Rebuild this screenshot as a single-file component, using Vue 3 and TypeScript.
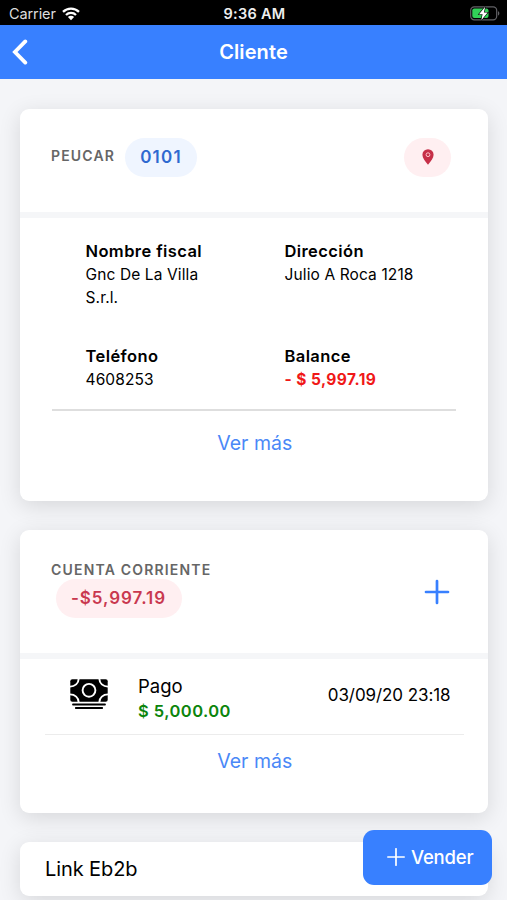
<script setup lang="ts">
interface Field {
  label: string
  value: string
  negative?: boolean
}

const fields: Field[] = [
  { label: 'Nombre fiscal', value: 'Gnc De La Villa S.r.l.' },
  { label: 'Dirección', value: 'Julio A Roca 1218' },
  { label: 'Teléfono', value: '4608253' },
  { label: 'Balance', value: '- $ 5,997.19', negative: true },
]
</script>

<template>
  <div class="screen">
    <div class="status">
      <div class="carrier">
        <span>Carrier</span>
        <svg class="wifi" width="18" height="14" viewBox="0 0 18 14">
          <g fill="none" stroke="#fff" stroke-width="2.3">
            <path d="M1 4.9a11.4 11.4 0 0 1 16 0" />
            <path d="M4 8a7.1 7.1 0 0 1 10 0" />
          </g>
          <path d="M9 13.2 5.9 10.1a4.4 4.4 0 0 1 6.2 0z" fill="#fff" />
        </svg>
      </div>
      <div class="clock">9:36 AM</div>
      <svg class="battery" width="30" height="15" viewBox="0 0 30 15">
        <rect x=".7" y=".8" width="26" height="13" rx="3.6" fill="none" stroke="#626266" stroke-width="1.2" />
        <rect x="2.3" y="2.6" width="16.2" height="9.4" rx="2" fill="#31d158" />
        <path d="M28 5.2c1.8.5 1.8 3.7 0 4.2z" fill="#626266" />
        <path d="M15.2.8 9 8.2h3.6l-1.3 6L17.7 6.5h-3.8z" fill="#fff" stroke="#000" stroke-width="1.2" paint-order="stroke" />
      </svg>
    </div>

    <header class="toolbar">
      <svg class="back" width="17" height="26" viewBox="0 0 17 26">
        <path d="M13.3 2.4 2.9 13l10.4 10.6" fill="none" stroke="#fff" stroke-width="3.8" stroke-linecap="round" stroke-linejoin="miter" />
      </svg>
      <h1>Cliente</h1>
    </header>

    <main>
      <section class="card client">
        <div class="card-head">
          <span class="caption peucar">PEUCAR</span>
          <span class="pill code">0101</span>
          <span class="pill pin">
            <svg width="12" height="16" viewBox="0 0 12 16">
              <path d="M6 .2A5.6 5.6 0 0 0 .4 5.8C.4 9.4 3.300 12.500 6 15.800c2.700-3.300 5.600-6.400 5.600-10A5.600 5.600 0 0 0 6 .2z" fill="#c62f48" />
              <circle cx="6" cy="5.700" r="1.900" fill="none" stroke="#ffc3ca" stroke-width="1" />
            </svg>
          </span>
        </div>
        <dl class="fields">
          <div v-for="field in fields" :key="field.label">
            <dt>{{ field.label }}</dt>
            <dd :class="{ negative: field.negative }">{{ field.value }}</dd>
          </div>
        </dl>
        <div class="rule"></div>
        <a class="more">Ver más</a>
      </section>

      <section class="card account">
        <div class="card-head">
          <div class="balance">
            <span class="caption">CUENTA CORRIENTE</span>
            <span class="pill debt">-$5,997.19</span>
          </div>
          <svg class="add" width="26" height="26" viewBox="0 0 26 26">
            <path d="M13 2v22M2 13h22" stroke="#3880ff" stroke-width="2.7" stroke-linecap="round" />
          </svg>
        </div>
        <div class="movement">
          <svg class="cash" width="38" height="31" viewBox="0 0 38 31">
            <rect x=".3" y=".3" width="37.400" height="22.500" rx="2" fill="#000" />
            <g fill="none" stroke="#fff" stroke-width="1.900">
              <circle cx="19" cy="11.300" r="6.400" />
              <path d="M8.600 0c0 4.200-3.600 7.600-8.600 7.600" />
              <path d="M29.400 0c0 4.200 3.600 7.600 8.600 7.600" />
              <path d="M8.600 23c0-4.200-3.600-7.600-8.600-7.600" />
              <path d="M29.400 23c0-4.200 3.600-7.600 8.600-7.600" />
            </g>
            <path d="M3 25.500h32M5.800 29h26.400" stroke="#000" stroke-width="1.800" stroke-linecap="round" />
          </svg>
          <div class="detail">
            <div class="kind">Pago</div>
            <div class="amount">$ 5,000.00</div>
          </div>
          <time>03/09/20 23:18</time>
        </div>
        <a class="more">Ver más</a>
      </section>

      <section class="card link">Link Eb2b</section>
    </main>

    <button class="sell">
      <svg width="18" height="18" viewBox="0 0 18 18">
        <path d="M9 .8v16.400M.8 9h16.400" stroke="#fff" stroke-width="1.700" stroke-linecap="round" />
      </svg>
      <span>Vender</span>
    </button>
  </div>
</template>

<style>
body {
  background: #f4f5f8;
  overflow: hidden;
}
</style>

<style scoped>
.screen {
  position: relative;
  box-sizing: border-box;
  height: 900px;
  overflow: hidden;
  background: #f4f5f8;
  color: #000;
  font-family: Inter, "Liberation Sans", sans-serif;
}

.status {
  display: grid;
  grid-template-columns: 1fr auto 1fr;
  align-items: center;
  height: 25px;
  padding: 2px 7px 0 9px;
  box-sizing: border-box;
  background: #000;
  color: #fff;
  font-size: 14.5px;
}

.carrier {
  display: flex;
  align-items: center;
  gap: 6px;
  color: #ddd;
  letter-spacing: -0.1px;
}

.clock {
  font-weight: 600;
  color: #eee;
  letter-spacing: 0.3px;
}

.battery {
  justify-self: end;
}

.toolbar {
  display: grid;
  grid-template-columns: 1fr auto 1fr;
  align-items: center;
  height: 54px;
  padding: 0 12px;
  background: #3880ff;
  color: #fff;
}

h1 {
  margin: 0;
  font-size: 20px;
  line-height: 26px;
  font-weight: 600;
  letter-spacing: 0.1px;
}

main {
  display: flex;
  flex-direction: column;
  gap: 29.5px;
  padding: 29.5px 19.5px 0 20px;
}

.card {
  flex: none;
  box-sizing: border-box;
  border-radius: 9px;
  background: #fff;
  box-shadow: 0 5px 22px rgba(0, 0, 0, 0.12);
}

.client {
  height: 392px;
}

.account {
  height: 282.5px;
}

.card-head {
  display: flex;
  align-items: flex-start;
  box-sizing: border-box;
  height: 109.5px;
  padding: 29.5px 36.5px 0 31px;
  border-bottom: 6px solid #f5f6f8;
}

.caption {
  font-size: 14px;
  line-height: 20px;
  font-weight: 600;
  letter-spacing: 1.18px;
  color: #666;
}

.peucar {
  width: 74px;
  padding-top: 8px;
}

.pill {
  box-sizing: border-box;
  height: 39px;
  border-radius: 20px;
  font-size: 17px;
  line-height: 39px;
  font-weight: 600;
  text-align: center;
}

.code {
  width: 72px;
  background: #eff5ff;
  color: #2e69d0;
  letter-spacing: 1.2px;
}

.pin {
  display: flex;
  align-items: center;
  justify-content: center;
  width: 47px;
  padding-bottom: 2px;
  margin-left: auto;
  background: #ffeff1;
}

.fields {
  display: grid;
  grid-template-columns: 150px 150px;
  grid-template-rows: 105px 64px;
  column-gap: 49px;
  margin: 0;
  padding: 22px 0 0 65.5px;
}

dt {
  font-size: 16.5px;
  line-height: 23px;
  font-weight: 600;
  letter-spacing: 0.4px;
}

dd {
  margin: 0;
  max-width: 135px;
  font-size: 15.5px;
  line-height: 23px;
  letter-spacing: 0.12px;
}

.negative {
  color: #f01818;
  font-weight: 700;
  letter-spacing: 0.42px;
}

.rule {
  height: 2px;
  margin: 0 32px;
  background: #dedede;
}

.more {
  display: block;
  padding-left: 2px;
  font-size: 19.5px;
  line-height: 26px;
  text-align: center;
  color: #4a88f7;
}

.client .more {
  margin-top: 19px;
}

.account .card-head {
  height: 129px;
  padding-right: 37.5px;
}

.balance {
  display: flex;
  flex-direction: column;
}

.debt {
  width: 126px;
  margin: -1px 0 0 4.5px;
  background: #ffeff1;
  color: #c9384f;
  letter-spacing: 0.95px;
}

.add {
  margin: 19px 0 0 auto;
}

.movement {
  display: flex;
  align-items: flex-start;
  box-sizing: border-box;
  height: 76px;
  margin: 0 24px 0 25px;
  padding: 14px 13px 0 25px;
  border-bottom: 1.5px solid #ececec;
}

.cash {
  margin-top: 6px;
}

.detail {
  margin-left: 30px;
}

.kind {
  font-size: 18.5px;
  line-height: 26px;
}

.amount {
  font-size: 16.5px;
  line-height: 24px;
  font-weight: 600;
  letter-spacing: 0.45px;
  color: #0c850c;
}

time {
  margin: 9px 0 0 auto;
  font-size: 17px;
  line-height: 26px;
  letter-spacing: -0.08px;
}

.account .more {
  margin-top: 13px;
}

.link {
  height: 53.5px;
  padding-left: 25px;
  font-size: 20px;
  line-height: 54px;
  letter-spacing: -0.1px;
}

.sell {
  position: absolute;
  top: 830px;
  left: 363px;
  display: flex;
  align-items: center;
  gap: 6px;
  width: 129px;
  height: 54.5px;
  padding: 0 0 0 24px;
  border: 0;
  border-radius: 11px;
  background: #3880ff;
  color: #fff;
  font-family: inherit;
  font-size: 18.5px;
  font-weight: 500;
  letter-spacing: -0.2px;
}
</style>
